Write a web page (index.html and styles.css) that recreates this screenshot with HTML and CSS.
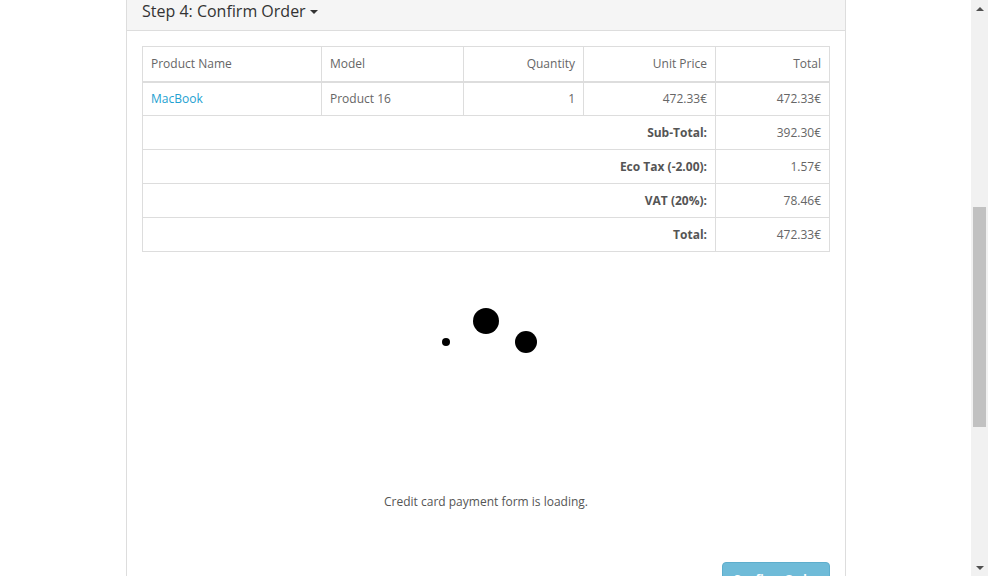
FILE: index.html
```html
<!DOCTYPE html>
<html>
<head>
<meta charset="utf-8">
<link rel="stylesheet" href="styles.css">
</head>
<body>
<div class="page">
  <div class="main">
    <div class="panel">
      <div class="panel-heading">
        <span class="panel-title">Step 4: Confirm Order</span><span class="caret"></span>
      </div>
      <div class="panel-body">
        <table class="cart">
          <colgroup>
            <col class="c1"><col class="c2"><col class="c3"><col class="c4"><col class="c5">
          </colgroup>
          <thead>
            <tr>
              <td class="left">Product Name</td>
              <td class="left">Model</td>
              <td class="right">Quantity</td>
              <td class="right">Unit Price</td>
              <td class="right">Total</td>
            </tr>
          </thead>
          <tbody>
            <tr>
              <td class="left"><a class="link" href="#">MacBook</a></td>
              <td class="left">Product 16</td>
              <td class="right">1</td>
              <td class="right">472.33€</td>
              <td class="right">472.33€</td>
            </tr>
          </tbody>
          <tfoot>
            <tr><td colspan="4" class="right label">Sub-Total:</td><td class="right">392.30€</td></tr>
            <tr><td colspan="4" class="right label">Eco Tax (-2.00):</td><td class="right">1.57€</td></tr>
            <tr><td colspan="4" class="right label">VAT (20%):</td><td class="right">78.46€</td></tr>
            <tr><td colspan="4" class="right label">Total:</td><td class="right">472.33€</td></tr>
          </tfoot>
        </table>
        <div class="loader">
          <div class="slot"><span class="dot dot-s"></span></div>
          <div class="slot"><span class="dot dot-l"></span></div>
          <div class="slot"><span class="dot dot-m"></span></div>
        </div>
        <p class="loading-text">Credit card payment form is loading.</p>
        <div class="buttons">
          <button class="btn">Confirm Order</button>
        </div>
      </div>
    </div>
  </div>
  <div class="scrollbar">
    <div class="arrow arrow-up"></div>
    <div class="track"><div class="thumb"></div></div>
    <div class="arrow arrow-down"></div>
  </div>
</div>
</body>
</html>
```

FILE: styles.css
```css
* { box-sizing: border-box; }
html, body { margin: 0; padding: 0; height: 576px; overflow: hidden; background: #fff; }
body { font-family: "Open Sans", "Liberation Sans", sans-serif; font-size: 12px; color: #666; }

.page { display: flex; height: 576px; }
.main { flex: 1; padding-left: 126px; overflow: hidden; }

.panel {
  width: 720px;
  height: 700px;
  border-left: 1px solid #ddd;
  border-right: 1px solid #ddd;
}
.panel-heading {
  height: 31px;
  background: #f5f5f5;
  border-bottom: 1px solid #ddd;
  padding: 0 15px;
  display: flex;
  align-items: center;
  padding-bottom: 8px;
}
.panel-title { font-size: 16px; color: #333; line-height: 20px; }
.caret {
  display: inline-block;
  width: 0; height: 0;
  margin-left: 4px;
  margin-top: 2px;
  border-left: 4px solid transparent;
  border-right: 4px solid transparent;
  border-top: 4px solid #333;
}

.panel-body { padding: 15px; }

.cart {
  width: 687px;
  border-collapse: collapse;
  table-layout: fixed;
}
.c1 { width: 179px; }
.c2 { width: 142px; }
.c3 { width: 120px; }
.c4 { width: 132px; }
.c5 { width: 114px; }
.cart td {
  border: 1px solid #ddd;
  padding: 0 8px;
  height: 34px;
  line-height: 17px;
}
.cart thead td { height: 35px; border-bottom: 2px solid #ddd; }
.left { text-align: left; }
.right { text-align: right; }
.label { font-weight: bold; color: #555; }
.link { color: #23a1d1; text-decoration: none; }

.loader {
  margin-top: 19px;
  height: 142px;
  display: flex;
  justify-content: center;
  align-items: center;
}
.slot { width: 40px; display: flex; justify-content: center; align-items: center; }
.dot { display: block; background: #000; border-radius: 50%; }
.dot-s { width: 8px; height: 8px; }
.dot-l { width: 26px; height: 26px; transform: translateY(-21px); }
.dot-m { width: 22px; height: 22px; }

.loading-text {
  margin: 80px 0 0;
  text-align: center;
  line-height: 17px;
  color: #555;
}
.buttons { display: flex; justify-content: flex-end; margin-top: 52px; }
.btn {
  width: 108px;
  height: 34px;
  background: #6fbbd8;
  border: 1px solid #5eaecd;
  border-radius: 4px;
  color: #fff;
  font-family: "Open Sans", "Liberation Sans", sans-serif;
  font-size: 12px;
  font-weight: bold;
  padding: 0;
}

.scrollbar {
  width: 17px;
  height: 576px;
  background: #f1f1f1;
  display: flex;
  flex-direction: column;
}
.arrow { height: 17px; display: flex; justify-content: center; align-items: center; }
.arrow::before { content: ""; width: 0; height: 0; border-left: 4px solid transparent; border-right: 4px solid transparent; }
.arrow-up::before { border-bottom: 4px solid #505050; }
.arrow-down::before { border-top: 4px solid #505050; }
.track { flex: 1; padding: 190px 2px 0; }
.thumb { height: 220px; background: #c1c1c1; }
```
